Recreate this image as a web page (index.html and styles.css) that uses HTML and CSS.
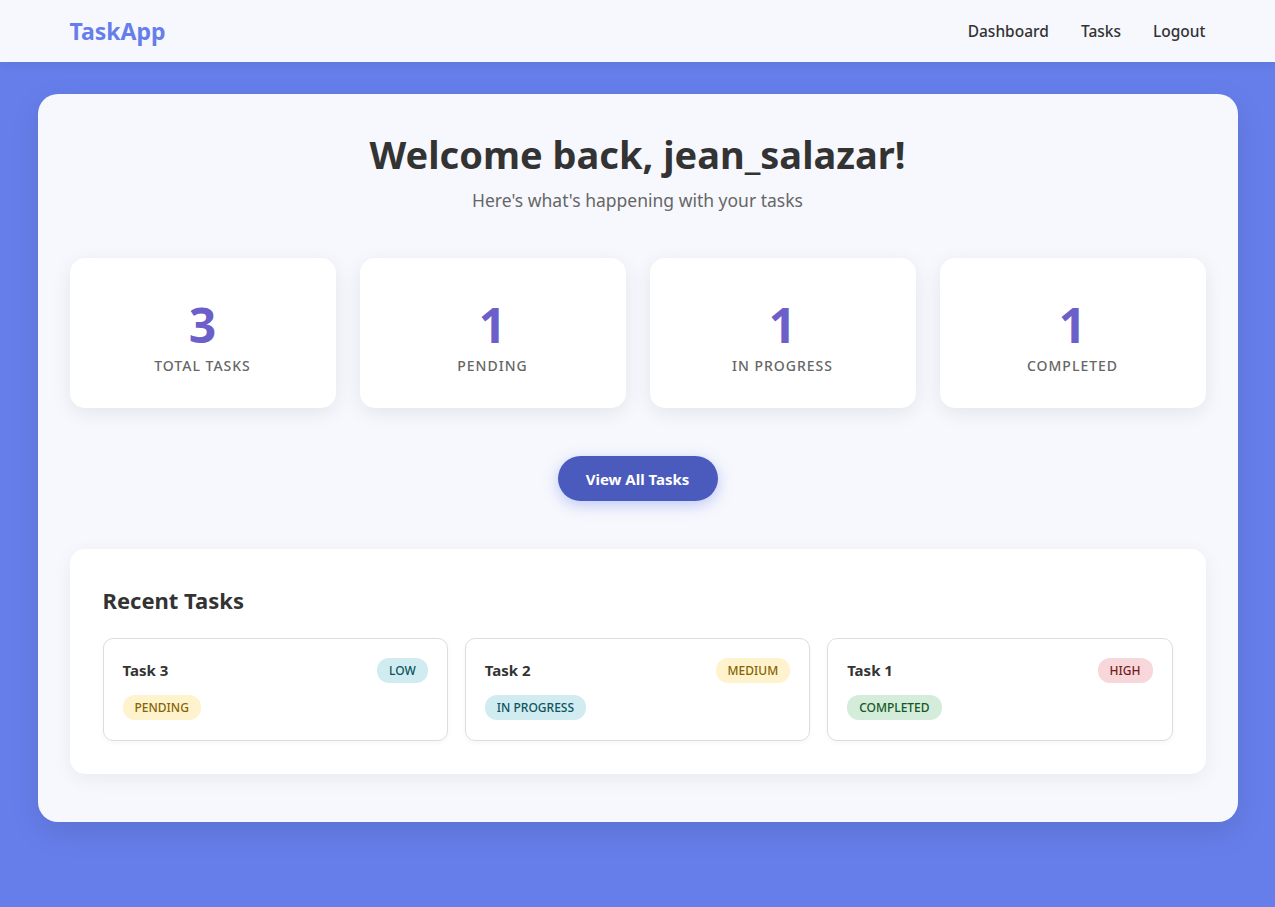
FILE: index.html
```html
<!DOCTYPE html>
<html lang="en">
<head>
<meta charset="utf-8">
<title>TaskApp - Dashboard</title>
<link rel="stylesheet" href="styles.css">
</head>
<body>
<header class="topbar">
  <div class="topbar-inner">
    <a class="logo" href="#">TaskApp</a>
    <nav class="nav">
      <a href="#">Dashboard</a>
      <a href="#">Tasks</a>
      <a href="#">Logout</a>
    </nav>
  </div>
</header>
<main class="panel">
  <div class="welcome">
    <h1>Welcome back, jean_salazar!</h1>
    <p>Here's what's happening with your tasks</p>
  </div>
  <section class="stats">
    <div class="stat"><div class="num">3</div><div class="label">Total Tasks</div></div>
    <div class="stat"><div class="num">1</div><div class="label">Pending</div></div>
    <div class="stat"><div class="num">1</div><div class="label">In Progress</div></div>
    <div class="stat"><div class="num">1</div><div class="label">Completed</div></div>
  </section>
  <div class="actions">
    <a class="btn" href="#">View All Tasks</a>
  </div>
  <section class="recent">
    <h2>Recent Tasks</h2>
    <div class="task-grid">
      <div class="task">
        <div class="task-head"><span class="task-title">Task 3</span><span class="badge b-info">Low</span></div>
        <span class="badge b-warn">Pending</span>
      </div>
      <div class="task">
        <div class="task-head"><span class="task-title">Task 2</span><span class="badge b-warn">Medium</span></div>
        <span class="badge b-info">In Progress</span>
      </div>
      <div class="task">
        <div class="task-head"><span class="task-title">Task 1</span><span class="badge b-danger">High</span></div>
        <span class="badge b-ok">Completed</span>
      </div>
    </div>
  </section>
</main>
</body>
</html>
```
FILE: styles.css
```css
* { box-sizing: border-box; }
html, body { margin: 0; padding: 0; }
body {
  font-family: "Noto Sans", "Open Sans", sans-serif;
  background: #667eea;
  color: #333;
  min-height: 907px;
}
a { text-decoration: none; }
.topbar {
  background: #f7f8fd;
  height: 62px;
  box-shadow: 0 2px 10px rgba(0,0,0,0.08);
}
.topbar-inner {
  max-width: 1200px;
  margin: 0 auto;
  padding: 0 32px;
  height: 62px;
  display: flex;
  align-items: center;
  justify-content: space-between;
}
.logo {
  color: #667eea;
  font-size: 23px;
  font-weight: 700;
}
.nav { display: flex; gap: 32px; }
.nav a {
  color: #333;
  font-size: 15.5px;
  font-weight: 500;
}
.panel {
  max-width: 1200px;
  margin: 32px auto;
  background: #f7f8fd;
  border-radius: 20px;
  padding: 32px 32px 48px;
  box-shadow: 0 10px 30px rgba(0,0,0,0.1);
}
.welcome { text-align: center; }
.welcome h1 {
  margin: 0;
  font-size: 38px;
  font-weight: 700;
  color: #333;
  line-height: 56px;
}
.welcome p {
  margin: 6px 0 0;
  font-size: 17.5px;
  color: #666;
}
.stats {
  margin-top: 46px;
  display: grid;
  grid-template-columns: repeat(4, 1fr);
  gap: 24px;
}
.stat {
  background: #fff;
  border-radius: 15px;
  height: 150px;
  display: flex;
  flex-direction: column;
  align-items: center;
  justify-content: center;
  padding-top: 6px;
  box-shadow: 0 5px 20px rgba(0,0,0,0.08);
}
.num {
  font-size: 48px;
  font-weight: 700;
  line-height: 1.15;
  color: #6c5fc9;
}
.label {
  margin-top: 4px;
  font-size: 14px;
  font-weight: 500;
  letter-spacing: 1px;
  text-transform: uppercase;
  color: #666;
}
.actions {
  display: flex;
  justify-content: center;
  margin-top: 48px;
}
.btn {
  display: inline-flex;
  align-items: center;
  justify-content: center;
  width: 160px;
  height: 45px;
  border-radius: 25px;
  background: #4a5bbd;
  color: #fff;
  font-size: 15px;
  font-weight: 700;
  box-shadow: 0 4px 15px rgba(102,126,234,0.4);
}
.recent {
  margin-top: 48px;
  background: #fff;
  border-radius: 15px;
  padding: 35px 33px 33px 33px;
  box-shadow: 0 5px 20px rgba(0,0,0,0.06);
}
.recent h2 {
  margin: 0 0 22px;
  font-size: 22px;
  font-weight: 700;
  color: #333;
  line-height: 32px;
}
.task-grid {
  display: grid;
  grid-template-columns: repeat(3, 1fr);
  gap: 17px;
}
.task {
  border: 1px solid #ddd;
  border-radius: 10px;
  padding: 19px;
  height: 103px;
  box-shadow: 0 2px 5px rgba(0,0,0,0.04);
}
.task-head {
  display: flex;
  justify-content: space-between;
  align-items: center;
  margin-bottom: 12px;
}
.task-title {
  font-size: 15px;
  font-weight: 700;
  color: #333;
  position: relative;
  top: -1px;
}
.badge {
  display: inline-block;
  height: 25px;
  line-height: 25px;
  padding: 0 12px;
  border-radius: 12px;
  font-size: 12px;
  font-weight: 500;
  text-transform: uppercase;
}
.b-info { background: #d1ecf1; color: #0c5460; }
.b-warn { background: #fff3cd; color: #856404; }
.b-danger { background: #f8d7da; color: #721c24; }
.b-ok { background: #d4edda; color: #155724; }
```
